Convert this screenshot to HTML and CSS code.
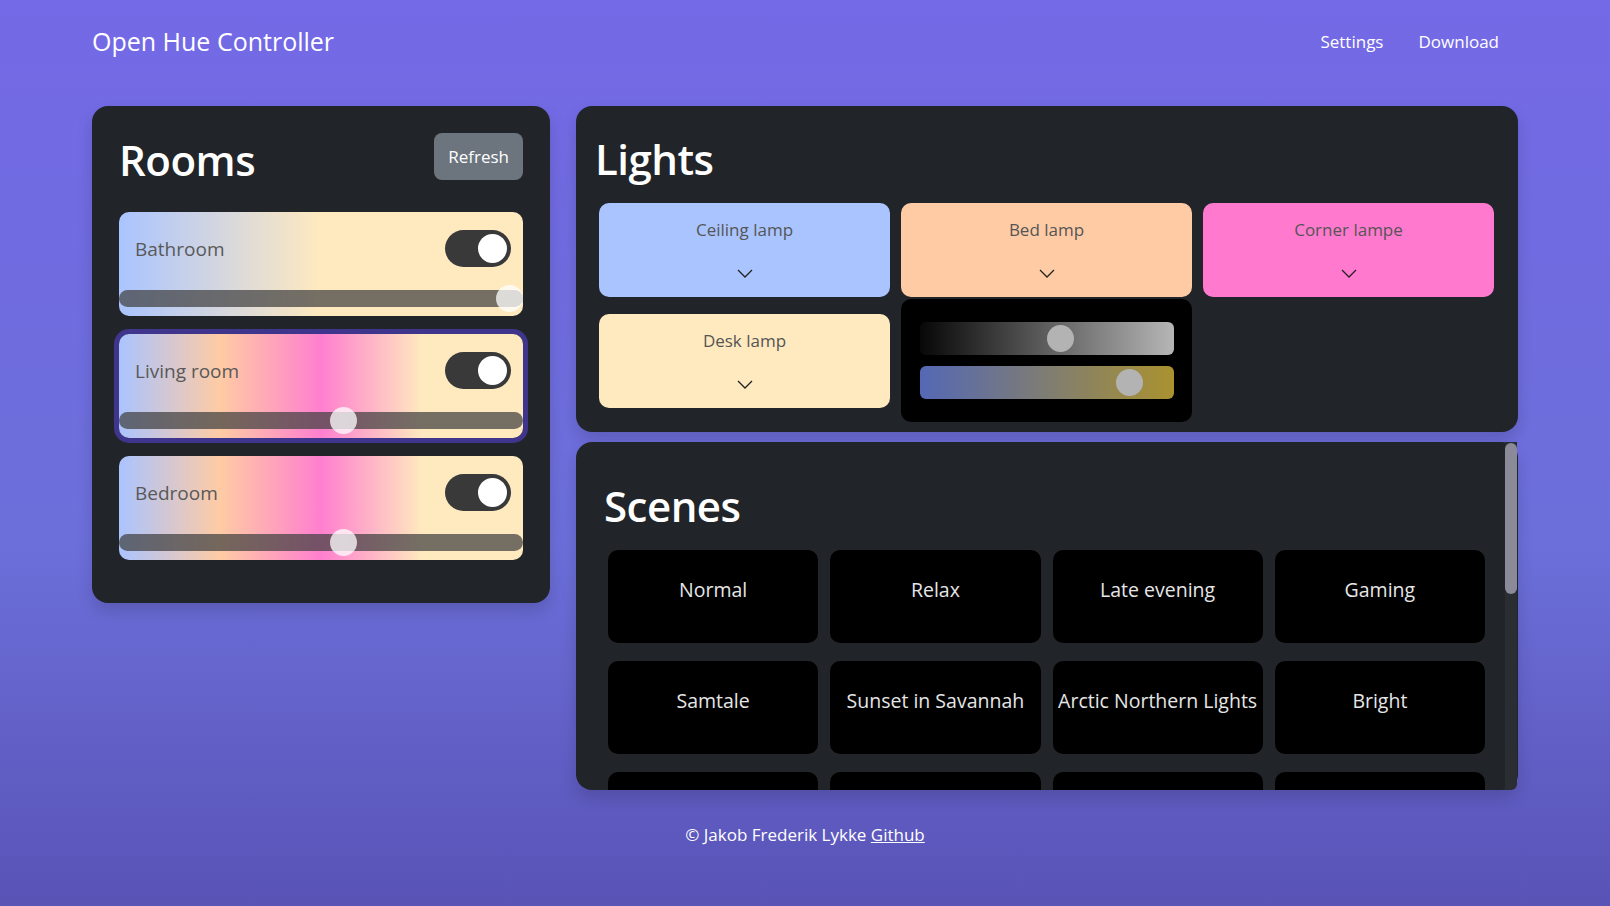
FILE: index.html
```html
<!DOCTYPE html>
<html lang="en">
<head>
<meta charset="utf-8">
<title>Open Hue Controller</title>
<link rel="stylesheet" href="styles.css">
</head>
<body>
<nav class="navbar">
  <div class="container nav-inner">
    <a class="brand" href="#">Open Hue Controller</a>
    <div class="nav-links">
      <a href="#">Settings</a>
      <a href="#">Download</a>
    </div>
  </div>
</nav>

<main class="container layout">
  <section class="card rooms">
    <div class="rooms-head">
      <h1 class="card-title">Rooms</h1>
      <button class="btn-refresh">Refresh</button>
    </div>

    <div class="room room-bath">
      <div class="room-row">
        <span class="room-name">Bathroom</span>
        <span class="toggle"><span class="knob"></span></span>
      </div>
      <div class="track"><span class="thumb" style="left: calc((100% - 27px) * 1)"></span></div>
    </div>

    <div class="room room-multi selected">
      <div class="room-row">
        <span class="room-name">Living room</span>
        <span class="toggle"><span class="knob"></span></span>
      </div>
      <div class="track"><span class="thumb" style="left: calc((100% - 27px) * 0.56)"></span></div>
    </div>

    <div class="room room-multi">
      <div class="room-row">
        <span class="room-name">Bedroom</span>
        <span class="toggle"><span class="knob"></span></span>
      </div>
      <div class="track"><span class="thumb" style="left: calc((100% - 27px) * 0.56)"></span></div>
    </div>
  </section>

  <div class="right-col">
    <section class="card lights">
      <h1 class="card-title">Lights</h1>
      <div class="light-grid">
        <div class="light">
          <div class="light-head c-blue">
            <span class="light-name">Ceiling lamp</span>
            <svg class="chev" viewBox="0 0 16 9" width="16" height="9"><polyline points="1,1 8,8 15,1"/></svg>
          </div>
        </div>
        <div class="light open">
          <div class="light-head c-peach">
            <span class="light-name">Bed lamp</span>
            <svg class="chev" viewBox="0 0 16 9" width="16" height="9"><polyline points="1,1 8,8 15,1"/></svg>
          </div>
          <div class="light-panel">
            <div class="slider s-bri"><span class="s-thumb" style="left: calc((100% - 27px) * 0.56)"></span></div>
            <div class="slider s-temp"><span class="s-thumb" style="left: calc((100% - 27px) * 0.865)"></span></div>
          </div>
        </div>
        <div class="light">
          <div class="light-head c-pink">
            <span class="light-name">Corner lampe</span>
            <svg class="chev" viewBox="0 0 16 9" width="16" height="9"><polyline points="1,1 8,8 15,1"/></svg>
          </div>
        </div>
        <div class="light">
          <div class="light-head c-cream">
            <span class="light-name">Desk lamp</span>
            <svg class="chev" viewBox="0 0 16 9" width="16" height="9"><polyline points="1,1 8,8 15,1"/></svg>
          </div>
        </div>
      </div>
    </section>

    <section class="card scenes">
      <div class="scenes-body">
        <h1 class="card-title">Scenes</h1>
        <div class="scene-grid">
          <button class="scene">Normal</button>
          <button class="scene">Relax</button>
          <button class="scene">Late evening</button>
          <button class="scene">Gaming</button>
          <button class="scene">Samtale</button>
          <button class="scene">Sunset in Savannah</button>
          <button class="scene">Arctic Northern Lights</button>
          <button class="scene">Bright</button>
          <button class="scene">Concentrate</button>
          <button class="scene">Read</button>
          <button class="scene">Dimmed</button>
          <button class="scene">Nightlight</button>
        </div>
      </div>
      <div class="scrollbar"><div class="scrollbar-thumb"></div></div>
    </section>
  </div>
</main>

<footer class="footer">
  © Jakob Frederik Lykke <a href="#">Github</a>
</footer>
</body>
</html>
```

FILE: styles.css
```css
* { box-sizing: border-box; }

html, body { margin: 0; padding: 0; }

body {
  min-height: 100vh;
  font-family: "Open Sans", "Noto Sans", sans-serif;
  color: #fff;
  background: linear-gradient(180deg, #7469e6 0%, #6c6fda 60%, #5953b6 100%);
}

.container {
  width: 1426px;
  margin: 0 auto;
}

/* nav */
.navbar { height: 82px; }
.nav-inner {
  height: 100%;
  display: flex;
  align-items: center;
  justify-content: space-between;
  padding-right: 19px;
}
.brand {
  color: #fff;
  text-decoration: none;
  font-size: 25px;
}
.nav-links { display: flex; gap: 35px; }
.nav-links a {
  color: #fff;
  text-decoration: none;
  font-size: 17px;
}

/* layout */
.layout {
  display: grid;
  grid-template-columns: 458px 1fr;
  column-gap: 26px;
  align-items: start;
  padding-top: 24px;
}

.card {
  background: #212529;
  border-radius: 16px;
  box-shadow: 0 8px 16px rgba(0, 0, 0, 0.15);
}

.card-title {
  margin: 0;
  font-size: 42px;
  font-weight: 600;
  line-height: 52px;
  letter-spacing: -0.5px;
}

/* rooms */
.rooms { padding: 27px 27px 25px; }
.rooms-head {
  display: flex;
  justify-content: space-between;
  align-items: flex-start;
  margin-bottom: 26px;
}
.rooms-head .card-title { padding-top: 1px; }
.btn-refresh {
  height: 47px;
  padding: 0 14px;
  border: 0;
  border-radius: 8px;
  background: #6c757d;
  color: #fff;
  font-family: inherit;
  font-size: 17px;
}

.room {
  height: 104px;
  border-radius: 10px;
  padding-top: 18px;
  margin-bottom: 18px;
}
.room-bath {
  background: linear-gradient(90deg, #aac4ff 0%, #ffe9bf 50%, #ffe9bf 100%);
}
.room-multi {
  background: linear-gradient(90deg, #aac4ff 0%, #ffcba4 25%, #ff7fcf 50%, #ffe9bf 75%, #ffe9bf 100%);
}
.room.selected {
  box-shadow: 0 0 0 5px #40358c;
}
.room-row {
  display: flex;
  align-items: center;
  justify-content: space-between;
  height: 37px;
  padding: 0 12px 0 16px;
}
.room-name {
  color: #595959;
  font-size: 19px;
}
.toggle {
  position: relative;
  width: 66px;
  height: 37px;
  border-radius: 19px;
  background: #393939;
}
.knob {
  position: absolute;
  right: 4px;
  top: 4px;
  width: 29px;
  height: 29px;
  border-radius: 50%;
  background: #fff;
}
.track {
  position: relative;
  height: 17px;
  margin-top: 23px;
  border-radius: 9px;
  background: rgba(64, 64, 64, 0.72);
}
.thumb {
  position: absolute;
  top: -5px;
  width: 27px;
  height: 27px;
  border-radius: 50%;
  background: rgba(255, 255, 255, 0.75);
}

/* right column */
.right-col {
  display: flex;
  flex-direction: column;
  gap: 10px;
}

.lights { padding: 27px 24px 24px 23px; }
.lights .card-title { margin: 0 0 18px -4px; }
.light-grid {
  display: grid;
  grid-template-columns: repeat(3, 1fr);
  column-gap: 11px;
  row-gap: 17px;
}
.light { position: relative; }
.light-head {
  height: 94px;
  border-radius: 10px;
  padding: 15px 0 19px;
  display: flex;
  flex-direction: column;
  align-items: center;
  justify-content: space-between;
}
.c-blue { background: #aac4ff; }
.c-peach { background: #ffcba4; }
.c-pink { background: #ff7acf; }
.c-cream { background: #ffe9bf; }
.light-name {
  color: #555;
  font-size: 17px;
  line-height: 24px;
}
.chev {
  fill: none;
  stroke: #222;
  stroke-width: 1.3;
}
.light-panel {
  position: absolute;
  left: 0;
  right: 0;
  top: 96px;
  height: 123px;
  border-radius: 10px;
  background: #000;
  padding: 23px 18px 0 19px;
  display: flex;
  flex-direction: column;
  gap: 11px;
  z-index: 2;
}
.slider {
  position: relative;
  height: 33px;
  border-radius: 6px;
}
.s-bri { background: linear-gradient(90deg, #080808 0%, #111 6%, #b6b6b6 100%); }
.s-temp { background: linear-gradient(90deg, #5468b5 0%, #aa9230 100%); }
.s-thumb {
  position: absolute;
  top: 3px;
  width: 27px;
  height: 27px;
  border-radius: 50%;
  background: #b3b3b3;
}

/* scenes */
.scenes {
  height: 348px;
  display: flex;
}
.scenes-body {
  flex: 1;
  min-width: 0;
  overflow: hidden;
  padding: 38px 20px 0 32px;
}
.scenes .card-title { margin: 0 0 18px -4px; }
.scrollbar {
  width: 12px;
  margin-right: 1px;
  background: #2a2d31;
  border-radius: 0 0 6px 0;
}
.scrollbar-thumb {
  height: 151px;
  margin-top: 1px;
  border-radius: 6px;
  background: #8b8a98;
}
.scene-grid {
  display: grid;
  grid-template-columns: repeat(4, 1fr);
  column-gap: 12px;
  row-gap: 18px;
}
.scene {
  height: 93px;
  border: 0;
  border-radius: 10px;
  background: #000;
  color: #e6e6e6;
  font-family: inherit;
  font-size: 19.5px;
  padding: 0 0 15px;
  white-space: nowrap;
}

/* footer */
.footer {
  text-align: center;
  margin-top: 31px;
  padding-bottom: 20px;
  font-size: 17px;
  line-height: 27px;
}
.footer a { color: #fff; }
```
